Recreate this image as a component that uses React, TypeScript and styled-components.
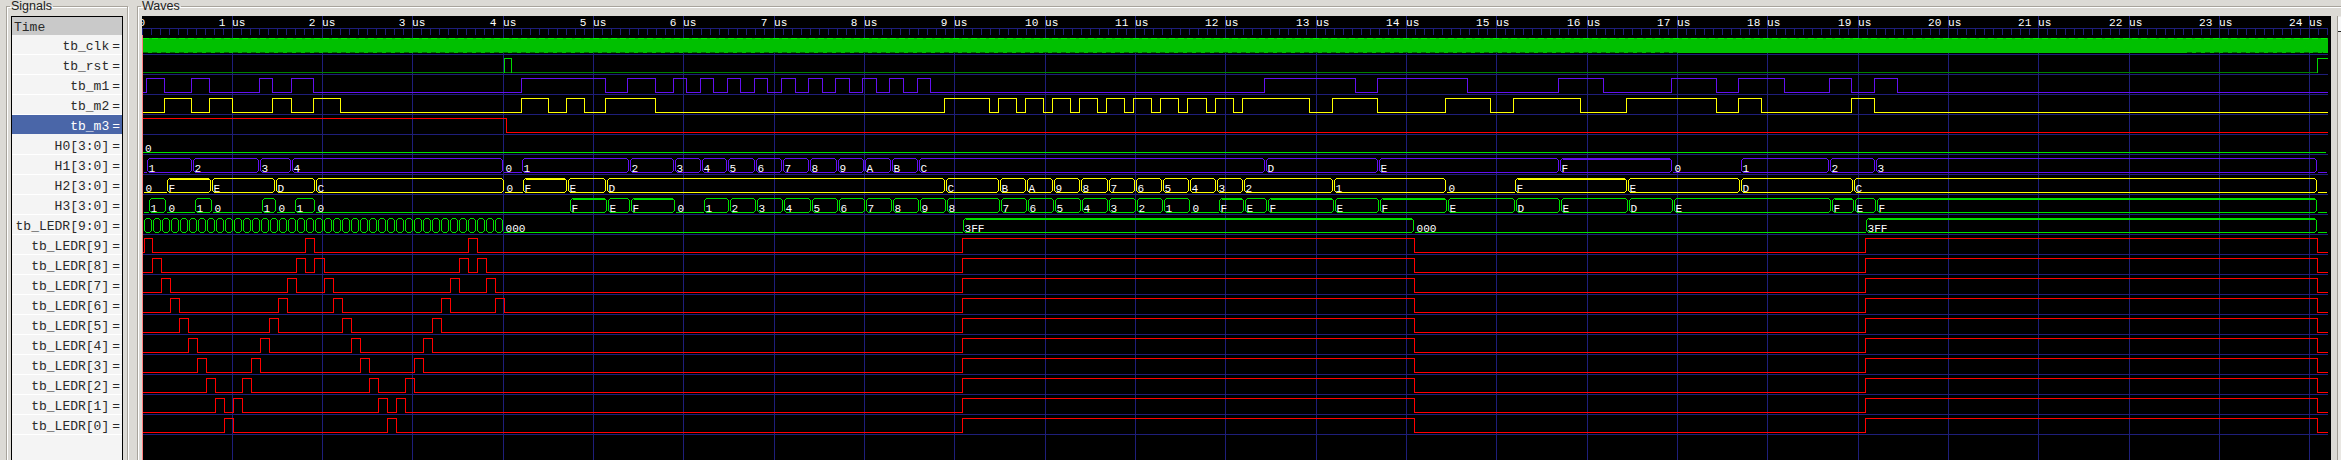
import React from 'react';
import styled, { createGlobalStyle } from 'styled-components';

const GlobalStyle = createGlobalStyle`
  html, body {
    margin: 0;
    padding: 0;
    background: #dcdad5;
    overflow: hidden;
  }
`;

const Page = styled.div`
  display: flex;
  gap: 9px;
  width: 2341px;
  height: 460px;
  padding-left: 6px;
  box-sizing: border-box;
  overflow: hidden;
  background: #dcdad5;
`;

const Group = styled.fieldset<{ $width: number }>`
  flex: none;
  box-sizing: border-box;
  width: ${p => p.$width}px;
  height: 480px;
  min-width: 0;
  margin: 0;
  padding: 4px 3px 0 4px;
  border: 1px solid #a8a49c;
  box-shadow: 1px 1px 0 #fff, inset 1px 1px 0 #fff;
`;

const GroupTitle = styled.legend`
  margin-left: -1px;
  padding: 0 1px;
  font: 12.5px/12px 'Liberation Sans', Arial, sans-serif;
  color: #222;
`;

const SignalList = styled.div`
  box-sizing: border-box;
  width: 112px;
  height: 470px;
  border: 1px solid #000;
  background: #f4f4f4;
  font: 13px/19px 'Liberation Mono', 'Courier New', monospace;
  color: #2a2a2a;
`;

const TimeRow = styled.div`
  height: 18px;
  padding-left: 2px;
  line-height: 22px;
  background: #c9c9c9;
`;

const SignalRow = styled.div<{ $selected?: boolean }>`
  display: flex;
  justify-content: flex-end;
  gap: 3px;
  height: 19px;
  padding-right: 2px;
  line-height: 23px;
  border-bottom: 1px solid #fff;
  background: ${p => (p.$selected ? '#4a66a8' : 'transparent')};
  color: ${p => (p.$selected ? '#fff' : 'inherit')};
  border-bottom-color: ${p => (p.$selected ? '#f4f4f4' : '#fff')};
`;

const WavesBody = styled.div`
  display: flex;
  height: 470px;
`;

const WaveCanvas = styled.svg`
  flex: none;
  display: block;
  width: 2189px;
  height: 444px;
  background: #000;
`;

const ScrollTrack = styled.div`
  flex: none;
  width: 14px;
  margin-left: 6px;
  border-left: 1px solid #a09c94;
  background: #e9e7e3;
`;

const ScrollArrow = styled.div`
  height: 14px;
  margin-top: 1px;
  border-bottom: 1px solid #222;
  background: #f7f7f7;
`;

const Lines = styled.g`
  fill: none;
  stroke: #1e1e7a;
  stroke-width: 1;
  shape-rendering: crispEdges;
`;

const Trace = styled.path<{ $color: string; $thick?: boolean }>`
  fill: none;
  stroke: ${p => p.$color};
  stroke-width: ${p => (p.$thick ? 2 : 1)};
  shape-rendering: crispEdges;
`;

const WaveText = styled.text`
  font: 11.1px 'Liberation Mono', 'Courier New', monospace;
  fill: #fff;
`;

const PURPLE = '#6410f0';
const YELLOW = '#ffff00';
const GREEN = '#00e000';
const RED = '#ff0000';

const START = 143;
const END = 2328;
const TAIL = 2326;
const rowHigh = (row: number) => 38.5 + 20 * row;
const rowLow = (row: number) => 52.5 + 20 * row;

const MAJOR = [
  142, 232, 322, 412, 503, 593, 683, 774, 864, 954, 1045, 1135, 1225, 1316, 1406, 1496, 1587, 1677, 1767, 1858, 1948,
  2038, 2129, 2219, 2309,
];

// ten minor ticks per microsecond, hung off the major lines
const TICKS = MAJOR.flatMap(x => Array.from({ length: 10 }, (_, i) => x + Math.round(i * 9.03))).filter(x => x <= END);

const M1_EDGES = [
  146, 164, 191, 209, 259, 272, 291, 313, 521, 605, 627, 655, 673, 686, 700, 713, 727, 740, 754, 767, 781, 795, 808,
  822, 835, 849, 862, 876, 889, 903, 917, 930, 1264, 1355, 1377, 1467, 1558, 1603, 1671, 1716, 1738, 1784, 1829, 1851,
  1874, 1897,
];

const M2_EDGES = [
  164, 191, 209, 232, 272, 291, 313, 340, 521, 548, 566, 584, 605, 655, 944, 989, 998, 1016, 1025, 1043, 1052, 1070,
  1079, 1097, 1106, 1124, 1133, 1151, 1160, 1178, 1187, 1206, 1215, 1233, 1242, 1309, 1332, 1377, 1445, 1490, 1513,
  1580, 1626, 1716, 1738, 1761, 1851, 1874,
];

const LEDR_TAIL = [962, 1414, 1865, 2317];
const LEDR_EDGES = [
  [144, 152, 305, 314, 468, 477],
  [152, 161, 296, 305, 314, 324, 459, 468, 477, 486],
  [161, 170, 287, 296, 324, 333, 450, 459, 486, 495],
  [170, 179, 278, 287, 333, 342, 441, 450, 495, 504],
  [179, 188, 269, 278, 342, 351, 432, 441],
  [188, 197, 260, 269, 351, 360, 423, 432],
  [197, 206, 251, 260, 360, 369, 414, 423],
  [206, 215, 242, 251, 369, 378, 405, 414],
  [215, 224, 233, 242, 378, 387, 396, 405],
  [224, 233, 387, 396],
];

type Segment = [string, number];

const H1: Segment[] = [
  ['0', 146], ['1', 192], ['2', 259], ['3', 291], ['4', 503], ['0', 521], ['1', 629], ['2', 674], ['3', 701],
  ['4', 727], ['5', 755], ['6', 782], ['7', 809], ['8', 837], ['9', 864], ['A', 891], ['B', 918], ['C', 1265],
  ['D', 1378], ['E', 1559], ['F', 1672], ['0', 1740], ['1', 1829], ['2', 1875], ['3', 2317], ['0', TAIL],
];

const H2: Segment[] = [
  ['0', 166], ['F', 211], ['E', 275], ['D', 315], ['C', 504], ['0', 522], ['F', 567], ['E', 606], ['D', 945],
  ['C', 999], ['B', 1026], ['A', 1053], ['9', 1080], ['8', 1108], ['7', 1135], ['6', 1162], ['5', 1189], ['4', 1216],
  ['3', 1243], ['2', 1333], ['1', 1446], ['0', 1514], ['F', 1627], ['E', 1740], ['D', 1853], ['C', 2317], ['0', TAIL],
];

const H3: Segment[] = [
  ['0', 148], ['1', 166], ['0', 194], ['1', 212], ['0', 261], ['1', 276], ['0', 294], ['1', 315], ['0', 569],
  ['F', 607], ['E', 630], ['F', 675], ['0', 703], ['1', 729], ['2', 756], ['3', 783], ['4', 811], ['5', 838],
  ['6', 865], ['7', 892], ['8', 919], ['9', 946], ['8', 1000], ['7', 1027], ['6', 1054], ['5', 1081], ['4', 1108],
  ['3', 1136], ['2', 1163], ['1', 1190], ['0', 1218], ['F', 1244], ['E', 1267], ['F', 1334], ['E', 1379], ['F', 1447],
  ['E', 1515], ['D', 1560], ['E', 1628], ['D', 1673], ['E', 1831], ['F', 1854], ['E', 1876], ['F', 2317], ['0', TAIL],
];

// the counter runs too fast for labels until the reset at 4 us
const LEDR_BUS: Segment[] = [
  ...Array.from({ length: 40 }, (_, i): Segment => ['', 152 + i * 9]),
  ['000', 962],
  ['3FF', 1414],
  ['000', 1865],
  ['3FF', 2317],
  ['000', TAIL],
];

const SIGNALS = [
  'tb_clk',
  'tb_rst',
  'tb_m1',
  'tb_m2',
  'tb_m3',
  'H0[3:0]',
  'H1[3:0]',
  'H2[3:0]',
  'H3[3:0]',
  'tb_LEDR[9:0]',
  ...Array.from({ length: 10 }, (_, i) => `tb_LEDR[${9 - i}]`),
];

function Digital({ row, edges, color }: { row: number; edges: number[]; color: string }) {
  const high = rowHigh(row);
  const low = rowLow(row);
  let d = `M${START} ${low}`;
  edges.forEach((edge, i) => {
    d += `H${edge + 0.5}V${i % 2 === 0 ? high : low}`;
  });
  d += `H${END}`;
  return <Trace $color={color} d={d} />;
}

function Bus({ row, segments, color }: { row: number; segments: Segment[]; color: string }) {
  const hi = rowHigh(row);
  const lo = rowLow(row);
  return (
    <g>
      {segments.map(([value, end], i) => {
        const begin = i === 0 ? START : segments[i - 1][1];
        const x0 = begin + 1.5;
        const x1 = end - 0.5;
        const isZero = /^0+$/.test(value);
        const isFull = value === 'F' || value === '3FF';
        const hasRoom = value !== '' && end - begin > value.length * 6.6 + 4;
        return (
          <React.Fragment key={i}>
            {isZero ? (
              <Trace $color={color} d={`M${begin + 0.5} ${lo}H${end + 0.5}`} />
            ) : (
              <Trace
                $color={color}
                d={`M${x0} ${lo - 2}V${hi + 2}L${x0 + 2} ${hi}H${x1 - 2}L${x1} ${hi + 2}V${lo - 2}L${x1 - 2} ${lo}H${x0 + 2}Z`}
              />
            )}
            {isFull && <Trace $color={color} $thick d={`M${x0 + 2} ${hi + 0.5}H${x1 - 2}`} />}
            {hasRoom && (
              <WaveText x={begin + 2.5} y={lo - 1}>
                {value}
              </WaveText>
            )}
          </React.Fragment>
        );
      })}
    </g>
  );
}

function App() {
  return (
    <Page>
      <GlobalStyle />
      <Group $width={122}>
        <GroupTitle>Signals</GroupTitle>
        <SignalList>
          <TimeRow>Time</TimeRow>
          {SIGNALS.map(name => (
            <SignalRow key={name} $selected={name === 'tb_m3'}>
              <span>{name}</span>
              <span>=</span>
            </SignalRow>
          ))}
        </SignalList>
      </Group>
      <Group $width={2230}>
        <GroupTitle>Waves</GroupTitle>
        <WavesBody>
          <WaveCanvas viewBox="142 16 2189 444">
            <Lines>
              {MAJOR.slice(1).map(x => (
                <path key={x} d={`M${x + 0.5} 16V460`} />
              ))}
              <path d={`M142 28.5H${END}`} />
              <path d={TICKS.map(x => `M${x + 0.5} 28V35`).join('')} />
              <path d={SIGNALS.map((_, i) => `M143 ${54.5 + 20 * i}H${END}`).join('')} />
            </Lines>
            {MAJOR.map((x, n) => (
              <WaveText key={n} x={n === 0 ? 138.5 : x - (String(n).length + 1) * 6.66} y={26}>
                {n === 0 ? '0' : `${n} us`}
              </WaveText>
            ))}

            <rect x={143} y={38} width={2185} height={15} fill="#00c000" />
            <Trace $color="#00f000" strokeDasharray="6 3" d={`M143 38.5H${END}`} />
            <Trace $color="#006a00" strokeDasharray="5 4" d={`M143 52.5H1677M2187 52.5H2323`} />

            <Trace $color="#008000" d={`M143 72.5H2317`} />
            <Trace $color="#00d800" d={`M504.5 72.5V58.5H511.5V72.5M2317.5 72.5V58.5H${END}`} />

            <Digital row={2} edges={M1_EDGES} color={PURPLE} />
            <Digital row={3} edges={M2_EDGES} color={YELLOW} />
            <Trace $color={RED} d={`M143 ${rowHigh(4)}H506.5V${rowLow(4)}H${END}`} />

            <Trace $color={GREEN} d={`M143 ${rowLow(5)}H${TAIL}`} />
            <WaveText x={145} y={rowLow(5) - 1}>
              0
            </WaveText>
            <Bus row={6} segments={H1} color={PURPLE} />
            <Bus row={7} segments={H2} color={YELLOW} />
            <Bus row={8} segments={H3} color={GREEN} />
            <Bus row={9} segments={LEDR_BUS} color={GREEN} />

            {LEDR_EDGES.map((edges, i) => (
              <Digital key={i} row={10 + i} edges={[...edges, ...LEDR_TAIL]} color={RED} />
            ))}

            <Trace $color="#ff8080" d="M142.5 35V460" />
          </WaveCanvas>
          <ScrollTrack>
            <ScrollArrow />
          </ScrollTrack>
        </WavesBody>
      </Group>
    </Page>
  );
}

export default App;
